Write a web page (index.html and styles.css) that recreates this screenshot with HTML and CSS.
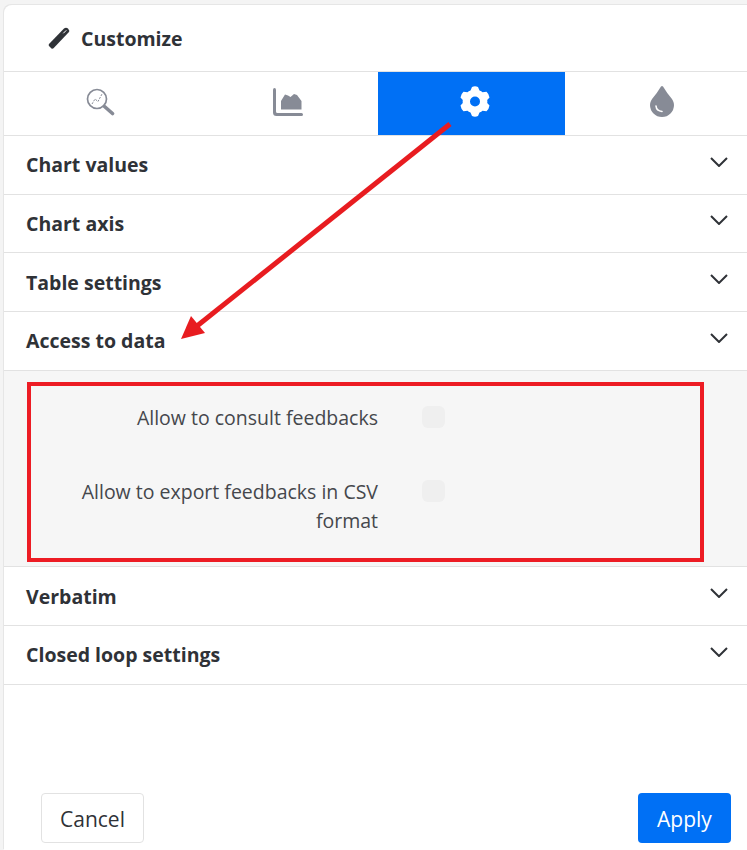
FILE: index.html
```html
<!DOCTYPE html>
<html lang="en">
<head>
  <meta charset="UTF-8">
  <title>Customize</title>
  <link rel="stylesheet" href="styles.css">
</head>
<body>
  <div class="panel">
    <div class="panel-title">
      <svg class="pen-icon" width="22" height="22" viewBox="0 0 22 22">
        <path d="M3.500 21.500 L1 19 Q0.300 18 1 17 L16 1.500 Q18 0 20 1.500 Q22 3.500 20.500 5.500 L5.500 21.300 Q4.500 22 3.500 21.500Z" fill="#2f3237"/>
        <path d="M15.300 6.300 L18.300 3.300" fill="none" stroke="#fff" stroke-width="1"/>
      </svg>
      <span>Customize</span>
    </div>

    <div class="tabs">
      <div class="tab">
        <svg width="30" height="28" viewBox="0 0 30 28" fill="none" stroke="#878b96">
          <circle cx="11" cy="11" r="9.500" stroke-width="1.700"/>
          <path d="M18.500 18.500 L26.500 25.500" stroke-width="3.600" stroke-linecap="round"/>
          <path d="M6 16 L9 11 L12 13.500 L16 6" stroke-width="1" stroke-dasharray="2 1.200"/>
        </svg>
      </div>
      <div class="tab">
        <svg width="30" height="28" viewBox="0 0 30 28" fill="#878b96">
          <path d="M0 2 Q0 0 1.500 0 Q3 0 3 2 V23.500 Q3 25 4.500 25 H28.500 Q30 25 30 26.500 Q30 28 28.500 28 H3.500 Q0 28 0 24.500Z"/>
          <path d="M8 21.500 V13 L12 6.500 L15 7.500 L17.500 9 L21 6 L24 7 L28.500 13 V21.500Z"/>
        </svg>
      </div>
      <div class="tab tab-active">
        <svg width="30" height="31" viewBox="0 0 30 31" fill="#fff">
          <path fill-rule="evenodd" d="M12 1 Q15 -0.500 18 1 L19.500 4.500 Q21.500 5.300 22.500 6.300 L26.500 5.800 Q29 8 29.500 11.500 L27.200 14 Q27.500 15.500 27.200 17 L29.500 19.500 Q29 23 26.500 25.200 L22.500 24.700 Q21.500 25.700 19.500 26.500 L18 30 Q15 31.500 12 30 L10.500 26.500 Q8.500 25.700 7.500 24.700 L3.500 25.200 Q1 23 0.500 19.500 L2.800 17 Q2.500 15.500 2.800 14 L0.500 11.500 Q1 8 3.500 5.800 L7.500 6.300 Q8.500 5.300 10.500 4.500Z M15 10.500 A5 5 0 1 0 15 20.500 A5 5 0 1 0 15 10.500Z"/>
        </svg>
      </div>
      <div class="tab">
        <svg width="24" height="31" viewBox="0 0 24 31">
          <path d="M12 0 Q13 0 14 2 Q17 7 20 10.500 Q24 15 24 19 A12 12 0 0 1 0 19 Q0 15 4 10.500 Q7 7 10 2 Q11 0 12 0Z" fill="#878b96"/>
          <path d="M6 20 Q6.500 25 12 25.500" fill="none" stroke="#fff" stroke-width="1.600" stroke-linecap="round"/>
        </svg>
      </div>
    </div>

    <div class="section">
      <span>Chart values</span>
      <svg class="chevron" width="18" height="10" viewBox="0 0 18 10"><path d="M1 1 L9 9 L17 1"/></svg>
    </div>
    <div class="section">
      <span>Chart axis</span>
      <svg class="chevron" width="18" height="10" viewBox="0 0 18 10"><path d="M1 1 L9 9 L17 1"/></svg>
    </div>
    <div class="section">
      <span>Table settings</span>
      <svg class="chevron" width="18" height="10" viewBox="0 0 18 10"><path d="M1 1 L9 9 L17 1"/></svg>
    </div>
    <div class="section">
      <span>Access to data</span>
      <svg class="chevron" width="18" height="10" viewBox="0 0 18 10"><path d="M1 1 L9 9 L17 1"/></svg>
    </div>

    <div class="section-body">
      <div class="option">
        <div class="option-label">Allow to consult feedbacks</div>
        <div class="check"></div>
      </div>
      <div class="option">
        <div class="option-label">Allow to export feedbacks in CSV format</div>
        <div class="check"></div>
      </div>
    </div>

    <div class="section">
      <span>Verbatim</span>
      <svg class="chevron" width="18" height="10" viewBox="0 0 18 10"><path d="M1 1 L9 9 L17 1"/></svg>
    </div>
    <div class="section">
      <span>Closed loop settings</span>
      <svg class="chevron" width="18" height="10" viewBox="0 0 18 10"><path d="M1 1 L9 9 L17 1"/></svg>
    </div>

    <div class="footer">
      <button class="btn btn-cancel">Cancel</button>
      <button class="btn btn-apply">Apply</button>
    </div>
  </div>

  <!-- annotation drawn over the screenshot -->
  <div class="red-box"></div>
  <svg class="red-arrow" width="747" height="850" viewBox="0 0 747 850">
    <path d="M450 124 L197 326" stroke="#e81c20" stroke-width="5" fill="none"/>
    <path d="M181 339 L191 316 L205 333Z" fill="#e81c20"/>
  </svg>
</body>
</html>
```

FILE: styles.css
```css
* {
  box-sizing: border-box;
}

body {
  margin: 0;
  height: 850px;
  overflow: hidden;
  background: #f4f4f4;
  font-family: "Open Sans", sans-serif;
  color: #2f3237;
  padding: 5px 0 0 4px;
}

.panel {
  width: 748px;
  height: 845px;
  background: #fff;
  border-radius: 8px 0 0 0;
  box-shadow: -1px -1px 0 #e6e6e6;
  display: flex;
  flex-direction: column;
}

.panel-title {
  height: 67px;
  flex-shrink: 0;
  display: flex;
  align-items: center;
  gap: 11px;
  padding: 0 0 0 44px;
  font-size: 19.5px;
  font-weight: 700;
  border-bottom: 1px solid #e2e2e2;
}

.pen-icon {
  display: block;
}

.tabs {
  display: flex;
  flex-shrink: 0;
  height: 64px;
  border-bottom: 1px solid #e2e2e2;
}

.tab {
  width: 187px;
  height: 63px;
  padding: 0 0 4px 7px;
  display: flex;
  align-items: center;
  justify-content: center;
}

.tab-active {
  background: #0070f5;
}

.section {
  height: 58.67px;
  flex-shrink: 0;
  display: flex;
  align-items: center;
  justify-content: space-between;
  padding: 0 24px 0 22px;
  font-size: 19.5px;
  font-weight: 700;
  border-bottom: 1px solid #e2e2e2;
}

.chevron {
  fill: none;
  stroke: #2f3237;
  stroke-width: 2;
  position: relative;
  top: -3px;
}

.section-body {
  height: 196.6px;
  flex-shrink: 0;
  background: #f6f6f6;
  border-bottom: 1px solid #e2e2e2;
  padding-top: 32px;
}

.option {
  display: flex;
  align-items: flex-start;
  margin-bottom: 45px;
}

.option-label {
  width: 374px;
  padding-left: 60px;
  text-align: right;
  font-size: 19.5px;
  line-height: 29px;
  color: #45474c;
}

.check {
  width: 23px;
  height: 22px;
  margin: 3px 0 0 44px;
  background: #efefef;
  border-radius: 6px;
}

.footer {
  flex: 1;
  display: flex;
  justify-content: space-between;
  align-items: flex-start;
  padding: 108px 21px 0 37px;
}

.btn {
  height: 50px;
  padding-top: 3px;
  font-family: "Open Sans", sans-serif;
  font-size: 21px;
  border-radius: 4px;
}

.btn-cancel {
  width: 103px;
  background: #fff;
  color: #2f3237;
  border: 1px solid #e2e2e2;
}

.btn-apply {
  width: 93px;
  background: #0070f5;
  color: #fff;
  border: none;
}

.red-box {
  position: absolute;
  left: 27px;
  top: 382px;
  width: 677px;
  height: 180px;
  border: 4px solid #ed1c24;
}

.red-arrow {
  position: absolute;
  left: 0;
  top: 0;
  pointer-events: none;
}
```
